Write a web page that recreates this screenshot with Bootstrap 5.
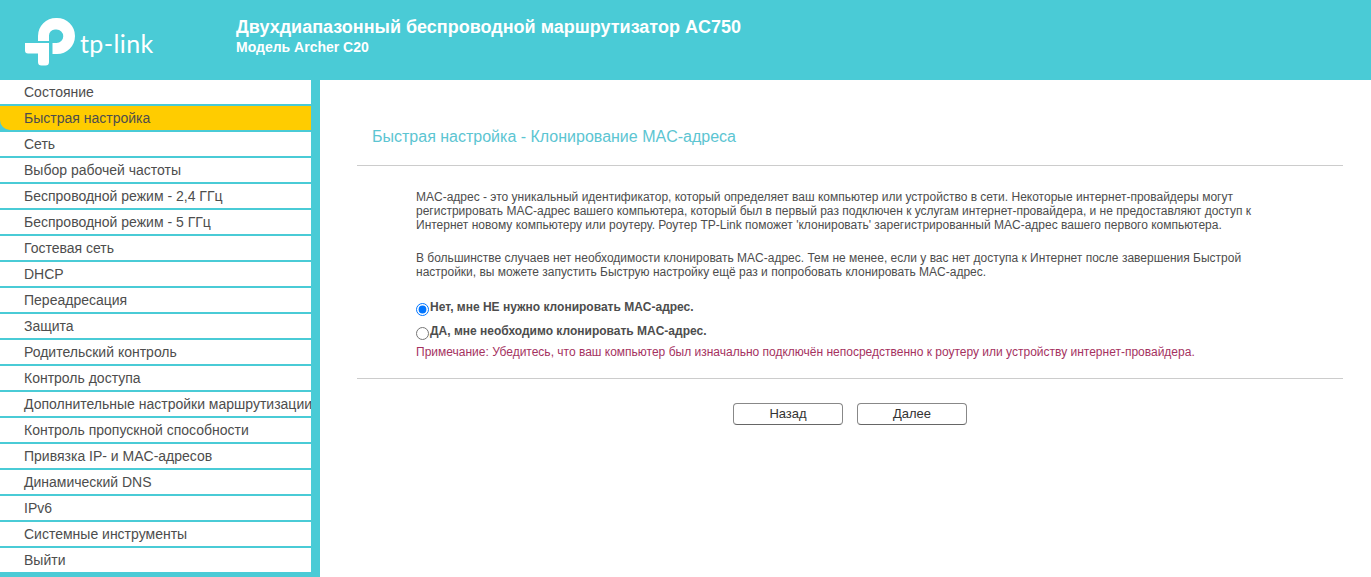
<!DOCTYPE html>
<html lang="ru">
<head>
    <meta charset="UTF-8">
    <meta name="viewport" content="width=device-width, initial-scale=1.0">
    <title>TP-Link Archer C20</title>
    <link rel="stylesheet" href="https://cdn.jsdelivr.net/npm/bootstrap@5.3.0/dist/css/bootstrap.min.css">
    <style>
        html, body {
            height: 577px;
            overflow: hidden;
        }
        body {
            font-family: "Liberation Sans", Arial, sans-serif;
            background: #fff;
            color: #4d4d4d;
        }
        .top-bar {
            height: 80px;
            background: #4acbd6;
            color: #fff;
        }
        .logo-box {
            width: 236px;
            padding: 17px 0 0 25px;
        }
        .logo-box svg {
            display: block;
        }
        .top-title {
            font-size: 18px;
            font-weight: 700;
            line-height: 20px;
            padding-top: 17px;
        }
        .top-model {
            font-size: 14px;
            font-weight: 700;
            line-height: 16px;
            margin-top: 2px;
        }
        .side-col {
            width: 320px;
            background: #4acbd6;
            padding-right: 9px;
            height: 497px;
            flex: none;
        }
        .side-item {
            display: block;
            height: 24px;
            margin-bottom: 2px;
            padding-left: 24px;
            background: #fff;
            color: #4d4d4d;
            font-size: 14px;
            line-height: 24px;
            white-space: nowrap;
            overflow: hidden;
            text-decoration: none;
        }
        .side-item.on {
            background: #fc0;
            border-bottom-left-radius: 10px;
        }
        .main-col {
            padding: 0 28px 0 37px;
        }
        .page-title {
            color: #5cc5d2;
            font-size: 16px;
            font-weight: 400;
            line-height: 20px;
            margin: 47px 0 18px 15px;
        }
        .rule {
            height: 1px;
            background: #ccc;
        }
        .body-text {
            font-size: 12px;
            line-height: 14px;
            padding: 24px 90px 0 59px;
        }
        .body-text p {
            margin-bottom: 19px;
        }
        .body-text p + p {
            margin-bottom: 16px;
        }
        .choice {
            display: flex;
            align-items: center;
            font-weight: 700;
            height: 24px;
        }
        .choice input {
            width: 13px;
            height: 13px;
            margin: 4px 1px 0 0;
            accent-color: #0075ff;
        }
        .note {
            color: #a5325f;
            line-height: 14px;
            margin-top: 2px;
            margin-bottom: 19px;
        }
        .step-btn {
            width: 110px;
            height: 22px;
            padding: 0;
            font-size: 13px;
            line-height: 20px;
            color: #333;
            background: #fff;
            border: 1px solid #888;
            border-bottom-color: #666;
            border-radius: 4px;
        }
        .btn-gap {
            gap: 14px;
        }
    </style>
</head>
<body>

<div class="top-bar d-flex">
    <div class="logo-box">
        <svg width="130" height="50" viewBox="25 17 130 50">
            <path fill="#fff" d="M38 41V36A18 18 0 0 1 56 18H57A18 18 0 0 1 57 54H52.500V43H56.500A6.700 6.700 0 0 0 56.500 29.500H55A6 6 0 0 0 49 35.500V41Z"/>
            <path fill="#fff" d="M25 43H49V62Q49 65.500 45.500 65.500H41.500Q38 65.500 38 62V53.500H28Q25 53.500 25 50.500Z"/>
            <text x="80" y="53" fill="#fff" font-family="Lato, 'Liberation Sans', sans-serif" font-size="25" letter-spacing=".4">tp-link</text>
        </svg>
    </div>
    <div>
        <div class="top-title">Двухдиапазонный беспроводной маршрутизатор AC750</div>
        <div class="top-model">Модель Archer C20</div>
    </div>
</div>

<div class="d-flex">
    <nav class="side-col">
        <a class="side-item" href="#">Состояние</a>
        <a class="side-item on" href="#">Быстрая настройка</a>
        <a class="side-item" href="#">Сеть</a>
        <a class="side-item" href="#">Выбор рабочей частоты</a>
        <a class="side-item" href="#">Беспроводной режим - 2,4 ГГц</a>
        <a class="side-item" href="#">Беспроводной режим - 5 ГГц</a>
        <a class="side-item" href="#">Гостевая сеть</a>
        <a class="side-item" href="#">DHCP</a>
        <a class="side-item" href="#">Переадресация</a>
        <a class="side-item" href="#">Защита</a>
        <a class="side-item" href="#">Родительский контроль</a>
        <a class="side-item" href="#">Контроль доступа</a>
        <a class="side-item" href="#">Дополнительные настройки маршрутизации</a>
        <a class="side-item" href="#">Контроль пропускной способности</a>
        <a class="side-item" href="#">Привязка IP- и MAC-адресов</a>
        <a class="side-item" href="#">Динамический DNS</a>
        <a class="side-item" href="#">IPv6</a>
        <a class="side-item" href="#">Системные инструменты</a>
        <a class="side-item" href="#">Выйти</a>
    </nav>

    <main class="main-col flex-grow-1">
        <h1 class="page-title">Быстрая настройка - Клонирование MAC-адреса</h1>
        <div class="rule"></div>
        <div class="body-text">
            <p>MAC-адрес - это уникальный идентификатор, который определяет ваш компьютер или устройство в сети. Некоторые интернет-провайдеры могут регистрировать MAC-адрес вашего компьютера, который был в первый раз подключен к услугам интернет-провайдера, и не предоставляют доступ к Интернет новому компьютеру или роутеру. Роутер TP-Link поможет 'клонировать' зарегистрированный MAC-адрес вашего первого компьютера.</p>
            <p>В большинстве случаев нет необходимости клонировать MAC-адрес. Тем не менее, если у вас нет доступа к Интернет после завершения Быстрой настройки, вы можете запустить Быструю настройку ещё раз и попробовать клонировать MAC-адрес.</p>
            <label class="choice"><input type="radio" name="clone" checked>Нет, мне НЕ нужно клонировать MAC-адрес.</label>
            <label class="choice"><input type="radio" name="clone">ДА, мне необходимо клонировать MAC-адрес.</label>
            <div class="note">Примечание: Убедитесь, что ваш компьютер был изначально подключён непосредственно к роутеру или устройству интернет-провайдера.</div>
        </div>
        <div class="rule"></div>
        <div class="d-flex justify-content-center btn-gap mt-4">
            <button class="step-btn" type="button">Назад</button>
            <button class="step-btn" type="button">Далее</button>
        </div>
    </main>
</div>

<script src="https://cdn.jsdelivr.net/npm/bootstrap@5.3.0/dist/js/bootstrap.bundle.min.js"></script>
</body>
</html>
